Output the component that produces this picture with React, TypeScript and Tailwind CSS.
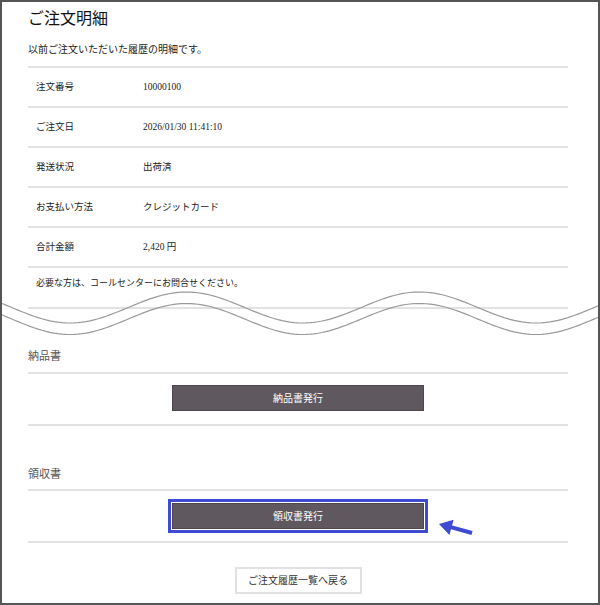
import React from 'react';

const rows = [
  { label: '注文番号', value: '10000100' },
  { label: 'ご注文日', value: '2026/01/30 11:41:10' },
  { label: '発送状況', value: '出荷済' },
  { label: 'お支払い方法', value: 'クレジットカード' },
  { label: '合計金額', value: '2,420 円' },
];

// wavy "cut" line across the page
function wavePath(offset: number) {
  const pts: string[] = [];
  for (let x = 0; x <= 600; x += 4) {
    const y = 17.5 + offset + 15.5 * Math.cos((2 * Math.PI * (x - 68)) / 233);
    pts.push(`${x === 0 ? 'M' : 'L'}${x},${y.toFixed(2)}`);
  }
  return pts.join(' ');
}

function Wave() {
  return (
    <svg
      className="absolute left-0 top-[288px] pointer-events-none"
      width="600"
      height="50"
      viewBox="0 0 600 50"
    >
      <path d={wavePath(0)} fill="none" stroke="#9a9a9a" strokeWidth="1.2" />
      <path d={wavePath(11.5)} fill="none" stroke="#9a9a9a" strokeWidth="1.2" />
    </svg>
  );
}

function Arrow() {
  return (
    <svg className="absolute left-[432px] top-[510px]" width="44" height="28" viewBox="0 0 44 28">
      <line x1="38" y1="21" x2="15" y2="14.6" stroke="#3f4bd0" strokeWidth="4" />
      <polygon points="5,12 19.6,7.7 15.4,23.1" fill="#3f4bd0" />
    </svg>
  );
}

export default function App() {
  return (
    <div className="relative w-[600px] h-[605px] overflow-hidden border-2 border-[#555] bg-white font-['Liberation_Serif','Noto_Sans_CJK_JP',serif] text-[#222]">
      <div className="ml-[26px] w-[540px]">
        <h1 className="pt-[5px] text-[16px] leading-[23px] text-[#111]">ご注文明細</h1>
        <p className="mt-[13px] text-[10px] leading-[14px] text-[#222]">以前ご注文いただいた履歴の明細です。</p>

        <div className="mt-[9px] border-t-2 border-[#e2e2e2]">
          {rows.map((r) => (
            <div key={r.label} className="flex h-[40px] items-center border-b-2 border-[#e2e2e2] pl-[8px] text-[9.5px] leading-[14px]">
              <span className="w-[107px]">{r.label}</span>
              <span>{r.value}</span>
            </div>
          ))}
          <div className="h-[41px] border-b-2 border-[#e2e2e2] pl-[8px] pt-[8px] text-[9px] leading-[14px]">
            必要な方は、コールセンターにお問合せください。
          </div>
        </div>

        <h2 className="mt-[39px] border-b-2 border-[#e2e2e2] pb-[8px] text-[11px] leading-[16px] text-[#555]">納品書</h2>
        <div className="flex justify-center border-b-2 border-[#e2e2e2] pt-[11px] pb-[13px]">
          <button className="h-[26px] w-[252px] border border-[#4d474d] bg-[#5f585f] text-[10px] text-white">
            納品書発行
          </button>
        </div>

        <h2 className="mt-[40px] border-b-2 border-[#e2e2e2] pb-[7px] text-[11px] leading-[16px] text-[#555]">領収書</h2>
        <div className="flex justify-center border-b-2 border-[#e2e2e2] pt-[12px] pb-[12px]">
          <button className="h-[26px] w-[252px] border border-[#4d474d] bg-[#5f585f] text-[10px] text-white outline-[3px] outline-solid outline-[#3f4bd0] outline-offset-[1px]">
            領収書発行
          </button>
        </div>

        <div className="mt-[24px] flex justify-center">
          <button className="h-[27px] w-[127px] border-2 border-[#e2e2e2] bg-white text-[10px] text-[#333]">
            ご注文履歴一覧へ戻る
          </button>
        </div>
      </div>
      <Wave />
      <Arrow />
    </div>
  );
}
